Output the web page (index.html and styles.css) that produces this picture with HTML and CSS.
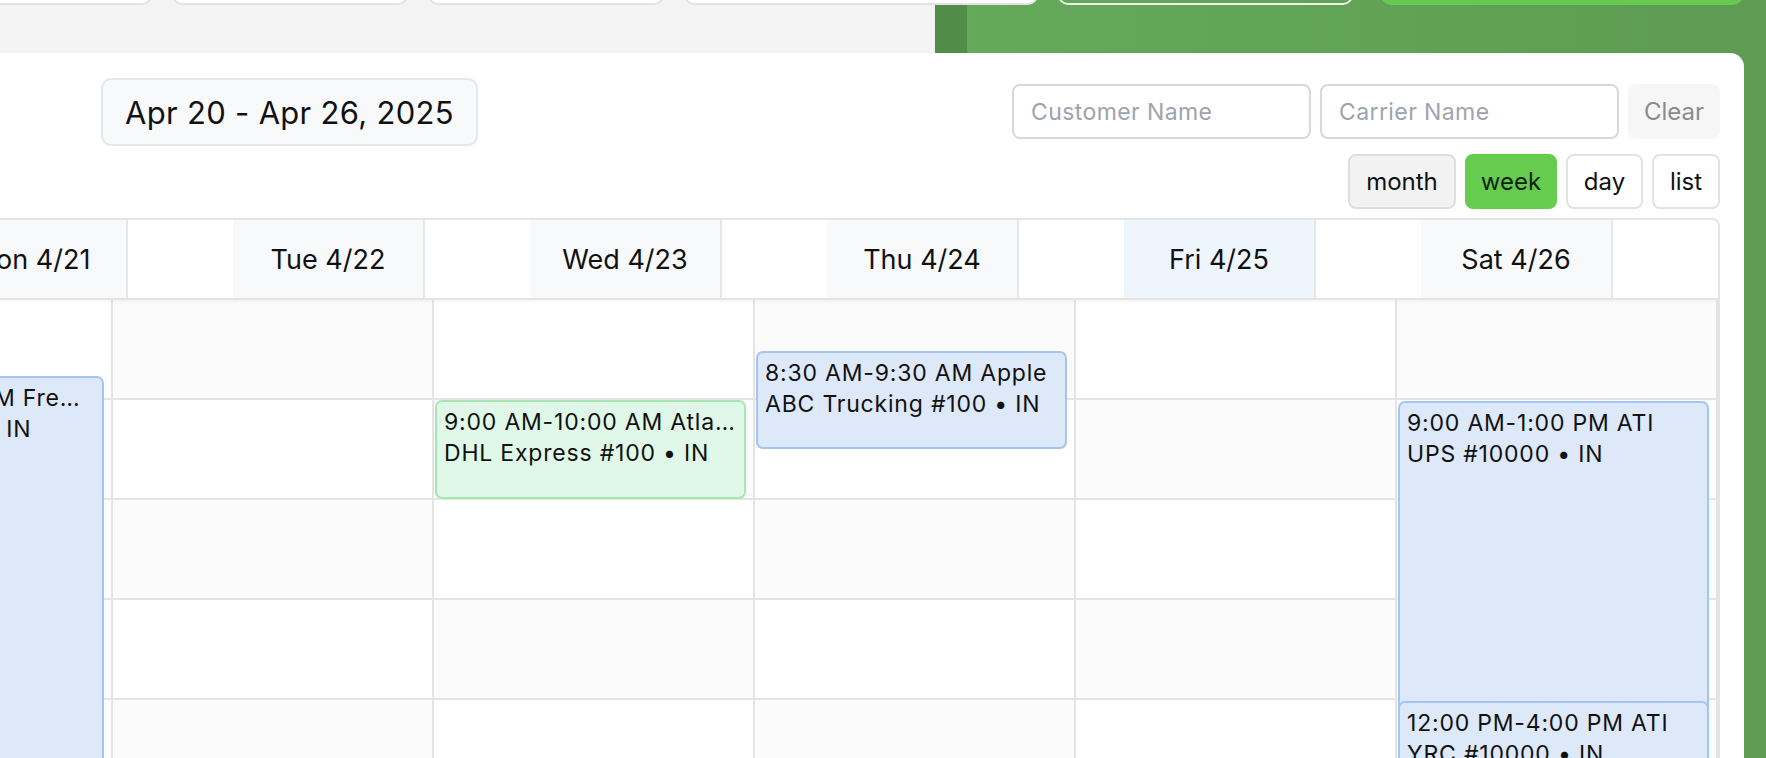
FILE: index.html
```html
<!DOCTYPE html>
<html lang="en">
<head>
<meta charset="utf-8">
<title>Dock Schedule</title>
<link rel="stylesheet" href="styles.css">
</head>
<body>
<div class="page">
  <div class="topbar">
    <span class="tb-btn tb-first"></span>
    <span class="tb-btn"></span>
    <span class="tb-btn"></span>
    <span class="tb-btn tb-wide"></span>
    <span class="tb-btn tb-outline"></span>
    <span class="tb-btn tb-primary"></span>
  </div>

  <main class="card">
    <div class="toolbar">
      <div class="title">Apr 20 - Apr 26, 2025</div>
      <div class="controls">
        <div class="filters">
          <input class="field" type="text" placeholder="Customer Name">
          <input class="field" type="text" placeholder="Carrier Name">
          <button class="clear" type="button">Clear</button>
        </div>
        <div class="views">
          <button class="view view-month" type="button">month</button>
          <button class="view view-active" type="button">week</button>
          <button class="view view-day" type="button">day</button>
          <button class="view view-list" type="button">list</button>
        </div>
      </div>
    </div>

    <div class="calendar">
      <div class="cal-head">
        <div class="head-spacer"></div>
        <div class="day-head"><span class="day-label">Sun 4/20</span></div>
        <div class="day-head"><span class="day-label">Mon 4/21</span></div>
        <div class="day-head"><span class="day-label">Tue 4/22</span></div>
        <div class="day-head"><span class="day-label">Wed 4/23</span></div>
        <div class="day-head"><span class="day-label">Thu 4/24</span></div>
        <div class="day-head"><span class="day-label day-today">Fri 4/25</span></div>
        <div class="day-head"><span class="day-label">Sat 4/26</span></div>
      </div>

      <div class="cal-body">
        <div class="axis"></div>

        <div class="day-col">
          <div class="slot"></div><div class="slot"></div><div class="slot"></div><div class="slot"></div><div class="slot"></div>
        </div>

        <div class="day-col">
          <div class="slot"></div><div class="slot"></div><div class="slot"></div><div class="slot"></div><div class="slot"></div>
          <div class="event event-blue" style="top:76px;height:420px">
            <div class="event-line">8:45 AM-11:45 AM Fremont Co</div>
            <div class="event-line">Saia Freight #4 • IN</div>
          </div>
        </div>

        <div class="day-col">
          <div class="slot"></div><div class="slot"></div><div class="slot"></div><div class="slot"></div><div class="slot"></div>
        </div>

        <div class="day-col">
          <div class="slot"></div><div class="slot"></div><div class="slot"></div><div class="slot"></div><div class="slot"></div>
          <div class="event event-green" style="top:100px;height:99px">
            <div class="event-line">9:00 AM-10:00 AM Atlanta Foods</div>
            <div class="event-line">DHL Express #100 • IN</div>
          </div>
        </div>

        <div class="day-col">
          <div class="slot"></div><div class="slot"></div><div class="slot"></div><div class="slot"></div><div class="slot"></div>
          <div class="event event-blue" style="top:51px;height:98px">
            <div class="event-line">8:30 AM-9:30 AM Apple</div>
            <div class="event-line">ABC Trucking #100 • IN</div>
          </div>
        </div>

        <div class="day-col">
          <div class="slot"></div><div class="slot"></div><div class="slot"></div><div class="slot"></div><div class="slot"></div>
        </div>

        <div class="day-col">
          <div class="slot"></div><div class="slot"></div><div class="slot"></div><div class="slot"></div><div class="slot"></div>
          <div class="event event-blue" style="top:101px;height:398px">
            <div class="event-line">9:00 AM-1:00 PM ATI</div>
            <div class="event-line">UPS #10000 • IN</div>
          </div>
          <div class="event event-blue" style="top:401px;height:398px">
            <div class="event-line">12:00 PM-4:00 PM ATI</div>
            <div class="event-line">YRC #10000 • IN</div>
          </div>
        </div>
      </div>
    </div>
  </main>
</div>
</body>
</html>
```

FILE: styles.css
```css
* {
  box-sizing: border-box;
}

html, body {
  margin: 0;
  padding: 0;
}

body {
  font-family: Inter, "Noto Sans", "DejaVu Sans", sans-serif;
  color: #111111;
  overflow: hidden;
}

.page {
  width: 1766px;
  height: 758px;
  overflow: hidden;
  background: linear-gradient(90deg, #f3f3f3 0, #f3f3f3 935px, #518d48 935px, #518d48 967px, #65a95b 967px, #5d9c52 100%);
}

/* ---- top bar (only the bottoms of the buttons are in view) ---- */
.topbar {
  display: flex;
  gap: 20px;
  height: 40px;
  margin-top: -35px;
}

.tb-btn {
  display: block;
  width: 236px;
  height: 40px;
  background: #ffffff;
  border: 2px solid #e2e2e2;
  border-radius: 10px;
}

.tb-first {
  margin-left: -84px;
}

.tb-wide {
  width: 354px;
}

.tb-outline {
  width: 295px;
  background: transparent;
  border-color: #eef3ec;
}

.tb-primary {
  width: 362px;
  margin-left: 8px;
  background: #68c952;
  border-color: #68c952;
}

/* ---- card ---- */
.card {
  display: block;
  margin: 48px 22px 0 -700px;
  padding: 25px 24px 0 24px;
  height: 760px;
  background: #ffffff;
  border-radius: 14px;
}

.toolbar {
  display: flex;
  justify-content: space-between;
  align-items: flex-start;
}

.title {
  width: 377px;
  height: 68px;
  margin-left: 777px;
  display: flex;
  align-items: center;
  justify-content: center;
  background: #f8f9fb;
  border: 2px solid #e5e7eb;
  border-radius: 10px;
  font-size: 31px;
  letter-spacing: 0.3px;
  color: #111111;
  white-space: nowrap;
}

.controls {
  display: flex;
  flex-direction: column;
  align-items: flex-end;
  gap: 15px;
  margin-top: 6px;
}

.filters {
  display: flex;
  gap: 9px;
}

.field {
  width: 299px;
  height: 55px;
  padding: 0 17px;
  border: 2px solid #d5d8de;
  border-radius: 8px;
  background: #ffffff;
  font-family: inherit;
  font-size: 23px;
  letter-spacing: 0.4px;
  color: #111111;
  outline: none;
}

.field::placeholder {
  color: #9ca3af;
}

.clear {
  width: 92px;
  height: 55px;
  border: none;
  border-radius: 8px;
  background: #f6f6f6;
  font-family: inherit;
  font-size: 24px;
  color: #8b8b8b;
  padding: 0;
}

.views {
  display: flex;
  gap: 9px;
}

.view {
  height: 55px;
  padding: 0;
  border: 2px solid #e2e2e2;
  border-radius: 8px;
  background: #ffffff;
  font-family: inherit;
  font-size: 24px;
  color: #111111;
}

.view-month {
  width: 108px;
  background: #f2f2f2;
  border-color: #dedede;
}

.view-active {
  width: 92px;
  background: #66cc4d;
  border-color: #66cc4d;
  color: #0d1f08;
}

.view-day {
  width: 77px;
}

.view-list {
  width: 68px;
}

/* ---- calendar ---- */
.calendar {
  margin-top: 9px;
  width: 2396px;
  border-top: 2px solid #e4e4e4;
  border-right: 2px solid #e4e4e4;
  border-left: 2px solid #e4e4e4;
  border-top-right-radius: 8px;
  overflow: hidden;
}

.cal-head {
  display: grid;
  grid-template-columns: 313px repeat(7, 297px);
  height: 80px;
  border-bottom: 2px solid #e4e4e4;
  box-shadow: 0 2px 3px rgba(0, 0, 0, 0.04);
  position: relative;
  z-index: 1;
  background: #ffffff;
}

.day-head {
  display: flex;
}

.day-label {
  width: 192px;
  display: flex;
  align-items: center;
  justify-content: center;
  background: #f8f9fa;
  border-right: 2px solid #e6e6e6;
  font-size: 27px;
  white-space: nowrap;
}

.day-today {
  background: #eef5fd;
}

.cal-body {
  display: grid;
  grid-template-columns: 145px repeat(7, 321px);
}

.day-col {
  position: relative;
  border-right: 2px solid #e4e4e4;
}

.slot {
  height: 100px;
  border-bottom: 2px solid #e4e4e4;
  background: #ffffff;
}

.day-col:nth-child(even) .slot:nth-child(odd),
.day-col:nth-child(odd) .slot:nth-child(even) {
  background: #fbfbfb;
}

.event {
  position: absolute;
  left: 1px;
  width: 311px;
  padding: 5px 7px;
  border: 2px solid #a3c5f5;
  border-radius: 7px;
  background: #dde8f9;
  font-size: 23px;
  line-height: 31px;
  letter-spacing: 0.8px;
  color: #111111;
  overflow: hidden;
}

.event-green {
  background: #e0f8e7;
  border-color: #a5e6b3;
}

.event-line {
  white-space: nowrap;
  overflow: hidden;
  text-overflow: ellipsis;
}
```
